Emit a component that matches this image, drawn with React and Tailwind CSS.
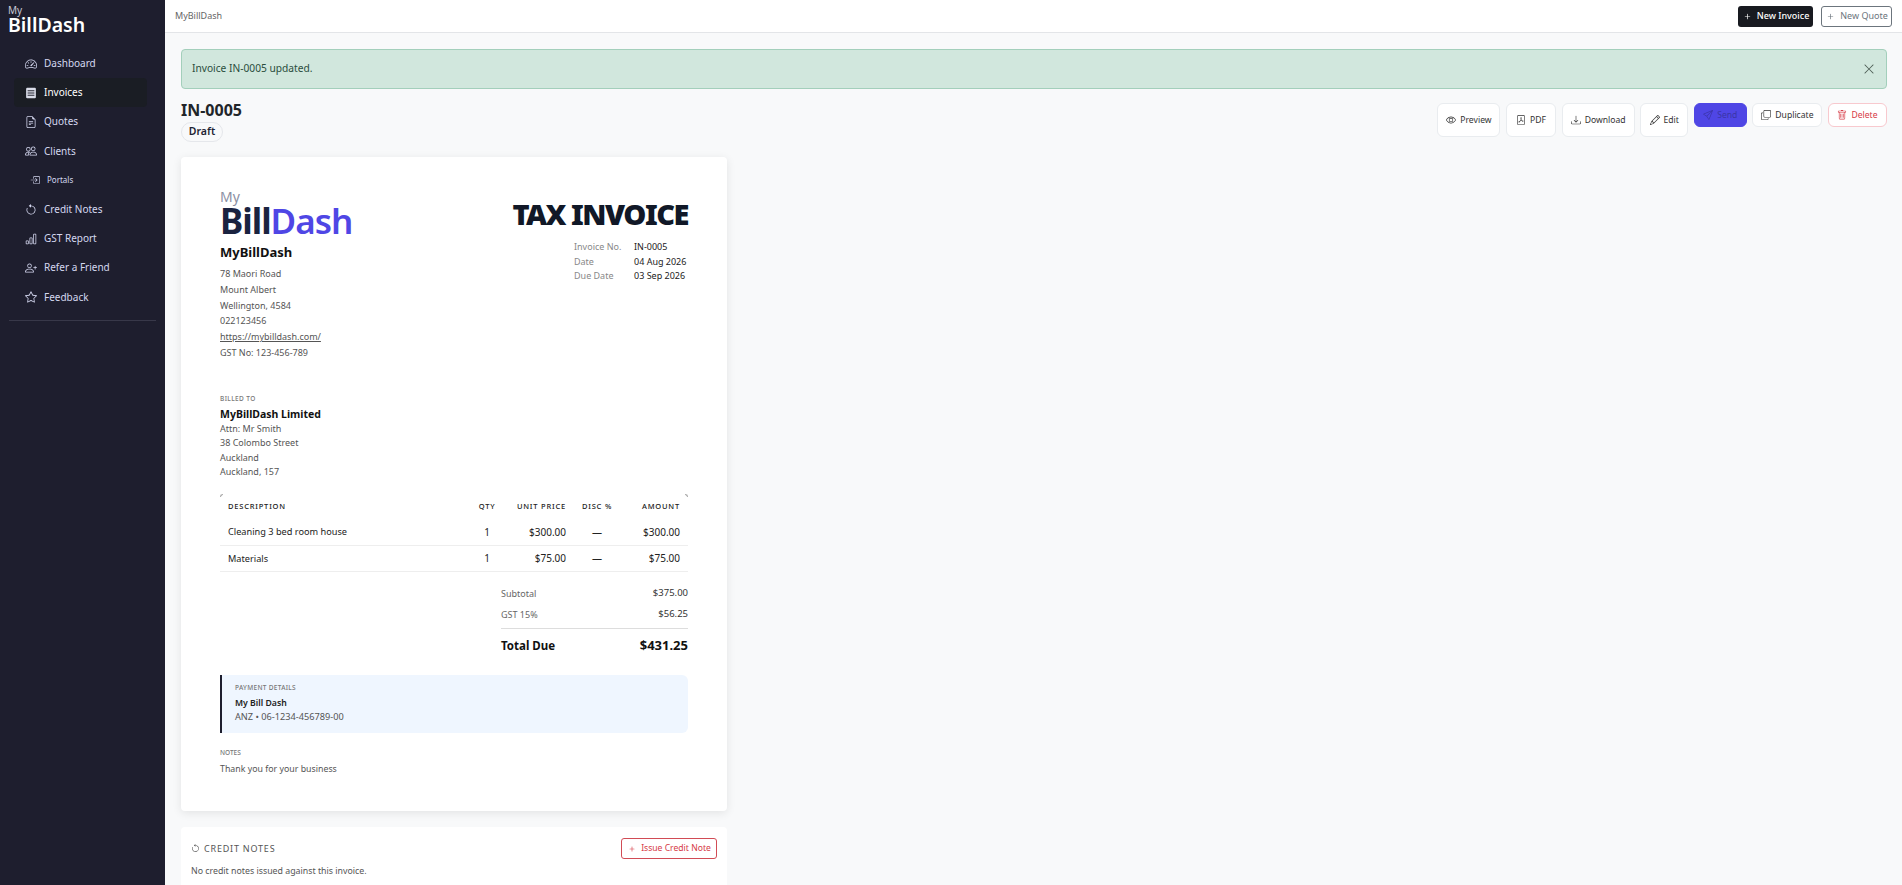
import React from "react";
import {
  BsArrowCounterclockwise,
  BsBarChart,
  BsBoxArrowInRight,
  BsCopy,
  BsDownload,
  BsEye,
  BsFilePdf,
  BsFileEarmarkText,
  BsPencil,
  BsPeople,
  BsPersonPlus,
  BsPlus,
  BsSend,
  BsSpeedometer2,
  BsStar,
  BsTrash,
  BsXLg,
} from "react-icons/bs";

const InvoiceIcon = ({ className }) => (
  <svg viewBox="0 0 16 16" className={className} width="1em" height="1em">
    <rect x="1.5" y="1" width="13" height="14" rx="1.5" fill="#d9dce8" />
    <path d="M3.5 5h9M3.5 8h9M3.5 11h9" stroke="#23232f" strokeWidth="1.3" />
  </svg>
);

const NAV = [
  { label: "Dashboard", icon: BsSpeedometer2 },
  { label: "Invoices", icon: InvoiceIcon, active: true },
  { label: "Quotes", icon: BsFileEarmarkText },
  { label: "Clients", icon: BsPeople },
  { label: "Portals", icon: BsBoxArrowInRight, sub: true },
  { label: "Credit Notes", icon: BsArrowCounterclockwise },
  { label: "GST Report", icon: BsBarChart },
  { label: "Refer a Friend", icon: BsPersonPlus },
  { label: "Feedback", icon: BsStar },
];

const Sidebar = () => (
  <aside className="w-[165px] shrink-0 bg-[#1e1e2e] text-white">
    <div className="pl-2 pt-[5px] leading-none">
      <div className="text-[10px] leading-[11px] text-[#c9c9d6]">My</div>
      <div className="text-[19.5px] font-semibold leading-[18px]">BillDash</div>
    </div>
    <nav className="mt-[15px] flex flex-col pl-[14px] pr-[18px]">
      {NAV.map((n) => (
        <div
          key={n.label}
          className={`flex h-[29.2px] items-center rounded ${
            n.active ? "bg-[#1a1d24] text-white" : "text-[#d5d8f0]"
          } ${n.sub ? "pl-[16px] text-[8px]" : "pl-[11px] text-[10px]"}`}
        >
          <n.icon className={n.sub ? "mr-[7px] text-[10px]" : "mr-[7px] text-[12px]"} />
          {n.label}
        </div>
      ))}
    </nav>
    <div className="mx-[9px] mt-[8.5px] border-t border-[#383849]" />
  </aside>
);

const ActionBtn = ({ icon: Icon, children, className }) => (
  <button
    className={`flex items-center justify-center gap-[4px] rounded-md border text-[8.6px] ${className}`}
  >
    <Icon className="text-[10px]" />
    {children}
  </button>
);

const Invoice = () => (
  <div className="h-[654px] w-[546px] shrink-0 rounded bg-white px-[39px] pt-[33px] text-[9px] shadow-[0_2px_10px_rgba(0,0,0,0.09)]">
    <div className="flex justify-between">
      <div>
        <div className="text-[14px] leading-[14px] text-[#8b8fa3]">My</div>
        <div className="mt-[2px] text-[35px] font-bold leading-[30px] tracking-[-1px]">
          <span className="text-[#1a2340]">Bill</span>
          <span className="font-semibold text-[#4f46e5]">Dash</span>
        </div>
        <div className="mt-[6px] text-[13px] font-bold leading-[20px] text-[#111]">MyBillDash</div>
        <div className="mt-[4px] leading-[15.8px] text-[#555]">
          <div>78 Maori Road</div>
          <div>Mount Albert</div>
          <div>Wellington, 4584</div>
          <div>022123456</div>
          <div className="underline">https://mybilldash.com/</div>
          <div>GST No: 123-456-789</div>
        </div>
      </div>
      <div className="pt-[7px]">
        <div className="whitespace-nowrap text-right text-[29px] font-black leading-[34px] tracking-[-1.5px] text-[#111827]">TAX INVOICE</div>
        <div className="mt-[9px] ml-auto w-[114px] whitespace-nowrap leading-[14.5px]">
          <div className="flex"><span className="w-[60px] text-[#888]">Invoice No.</span><span className="text-[#222]">IN-0005</span></div>
          <div className="flex"><span className="w-[60px] text-[#888]">Date</span><span className="text-[#222]">04 Aug 2026</span></div>
          <div className="flex"><span className="w-[60px] text-[#888]">Due Date</span><span className="text-[#222]">03 Sep 2026</span></div>
        </div>
      </div>
    </div>

    <div className="mt-[33px] text-[6.5px] font-medium uppercase leading-[10px] tracking-[0.4px] text-[#777]">Billed To</div>
    <div className="mt-[3px] text-[10.5px] font-bold leading-[15px] text-[#111]">MyBillDash Limited</div>
    <div className="leading-[14.4px] text-[#555]">
      <div>Attn: Mr Smith</div>
      <div>38 Colombo Street</div>
      <div>Auckland</div>
      <div>Auckland, 157</div>
    </div>

    <div className="relative mt-[15px]">
      <span className="absolute left-0 top-0 size-[3px] rounded-tl-[3px] border-l border-t border-[#aaaaaa]" />
      <span className="absolute right-0 top-0 size-[3px] rounded-tr-[3px] border-r border-t border-[#aaaaaa]" />
      <table className="w-full table-fixed text-[#222]">
        <thead>
          <tr className="h-[25px] text-[7.5px] uppercase tracking-[0.8px]">
            <th className="pl-[8px] text-left font-medium">Description</th>
            <th className="w-[30px] text-center font-medium">Qty</th>
            <th className="w-[70px] pr-[6px] text-right font-medium">Unit Price</th>
            <th className="w-[50px] text-center font-medium">Disc %</th>
            <th className="w-[66px] pr-[8px] text-right font-medium">Amount</th>
          </tr>
        </thead>
        <tbody className="text-[10px]">
          <tr className="h-[26px] border-b border-[#eeeeee]">
            <td className="pl-[8px] text-[9.2px]">Cleaning 3 bed room house</td>
            <td className="text-center">1</td>
            <td className="pr-[6px] text-right">$300.00</td>
            <td className="text-center">—</td>
            <td className="pr-[8px] text-right">$300.00</td>
          </tr>
          <tr className="h-[26px] border-b border-[#eeeeee]">
            <td className="pl-[8px] text-[9.2px]">Materials</td>
            <td className="text-center">1</td>
            <td className="pr-[6px] text-right">$75.00</td>
            <td className="text-center">—</td>
            <td className="pr-[8px] text-right">$75.00</td>
          </tr>
        </tbody>
      </table>
    </div>

    <div className="ml-auto mt-[11px] w-[187px]">
      <div className="flex h-[21px] items-center justify-between text-[#666]"><span>Subtotal</span><span className="text-[9.5px] text-[#333]">$375.00</span></div>
      <div className="flex h-[21px] items-center justify-between text-[#666]"><span>GST 15%</span><span className="text-[9.5px] text-[#333]">$56.25</span></div>
      <div className="mt-[3px] flex h-[34px] items-center justify-between border-t border-[#dddddd] text-[13px] font-bold text-[#111]"><span className="text-[11.5px]">Total Due</span><span>$431.25</span></div>
    </div>

    <div className="mt-[13px] h-[58px] rounded-r-md border-l-2 border-[#1e1e2e] bg-[#eff6ff] pl-[13px] pt-[8px]">
      <div className="text-[6.5px] font-medium uppercase leading-[9px] tracking-[0.3px] text-[#777]">Payment Details</div>
      <div className="mt-[4px] text-[8.7px] font-semibold leading-[14px] text-[#222]">My Bill Dash</div>
      <div className="text-[9.2px] leading-[14px] text-[#555]">ANZ • 06-1234-456789-00</div>
    </div>

    <div className="mt-[15px] text-[6.5px] font-medium uppercase leading-[9px] text-[#777]">Notes</div>
    <div className="mt-[4px] text-[8.8px] leading-[16px] text-[#555]">Thank you for your business</div>
  </div>
);

const CreditNotes = () => (
  <div className="mt-4 h-[120px] w-[546px] shrink-0 rounded bg-white px-[10px] pt-[11px] text-[#555]">
    <div className="flex items-center justify-between">
      <div className="flex items-center gap-1 text-[9px] uppercase tracking-[0.8px] text-[#555]">
        <BsArrowCounterclockwise className="text-[9px]" />
        Credit Notes
      </div>
      <button className="flex h-[21px] w-[96px] items-center justify-center gap-1 rounded-[3px] border border-[#d14b55] text-[8.6px] text-[#d63a45]">
        <BsPlus className="text-[10px]" />
        Issue Credit Note
      </button>
    </div>
    <div className="mt-[6px] text-[8.8px]">No credit notes issued against this invoice.</div>
  </div>
);

const App = () => (
  <div className="flex h-screen overflow-hidden bg-white font-['Noto_Sans',sans-serif]">
    <Sidebar />
    <div className="flex min-w-0 flex-1 flex-col">
      <header className="flex h-[33px] shrink-0 items-center justify-between border-b border-[#e3e5e8] bg-white pl-[10px] pr-[10px]">
        <span className="text-[9px] text-[#666]">MyBillDash</span>
        <div className="flex gap-2">
          <button className="flex h-[21px] w-[75px] items-center justify-center gap-1 rounded-[3px] bg-[#181a20] text-[9px] font-medium text-white">
            <BsPlus className="text-[11px]" />
            New Invoice
          </button>
          <button className="flex h-[21px] w-[71px] items-center justify-center gap-1 rounded-[3px] border border-[#6c757d] text-[9px] text-[#6c757d]">
            <BsPlus className="text-[11px]" />
            New Quote
          </button>
        </div>
      </header>
      <main className="flex flex-1 flex-col overflow-hidden bg-[#f8f9fa] pl-4 pr-[15px] pt-4">
        <div className="flex h-10 shrink-0 items-center justify-between rounded border border-[#a3cfbb] bg-[#d1e7dd] pl-[10px] pr-[11px] text-[10.2px] text-[#2a4d3c]">
          Invoice IN-0005 updated.
          <BsXLg className="text-[12px] text-[#4a5a52]" />
        </div>
        <div className="mt-[11px] flex shrink-0 justify-between">
          <div>
            <div className="text-[16px] font-bold leading-[20px] text-[#212529]">IN-0005</div>
            <div className="mt-[2px] flex h-[20px] w-[42px] items-center justify-center rounded-full border border-[#e5e7eb] text-[10.5px] font-semibold text-[#1e2433]">Draft</div>
          </div>
          <div className="mt-[3px] flex items-start gap-[5.6px]">
            <ActionBtn icon={BsEye} className="h-[34px] w-[63px] border-[#e9ecef] bg-white text-[#333]">Preview</ActionBtn>
            <ActionBtn icon={BsFilePdf} className="h-[34px] w-[50px] border-[#e9ecef] bg-white text-[#333]">PDF</ActionBtn>
            <ActionBtn icon={BsDownload} className="h-[34px] w-[73px] border-[#e9ecef] bg-white text-[#333]">Download</ActionBtn>
            <ActionBtn icon={BsPencil} className="h-[34px] w-[48px] border-[#e9ecef] bg-white text-[#333]">Edit</ActionBtn>
            <ActionBtn icon={BsSend} className="h-[24px] w-[53px] border-[#4f46e5] bg-[#4f46e5] text-[#3a35a8]">Send</ActionBtn>
            <ActionBtn icon={BsCopy} className="h-[24px] w-[70px] border-[#e9ecef] bg-white text-[#333]">Duplicate</ActionBtn>
            <ActionBtn icon={BsTrash} className="h-[24px] w-[59px] border-[#f8c9ce] bg-white text-[#d63a45]">Delete</ActionBtn>
          </div>
        </div>
        <div className="mt-[15px]">
          <Invoice />
          <CreditNotes />
        </div>
      </main>
    </div>
  </div>
);

export default App;
